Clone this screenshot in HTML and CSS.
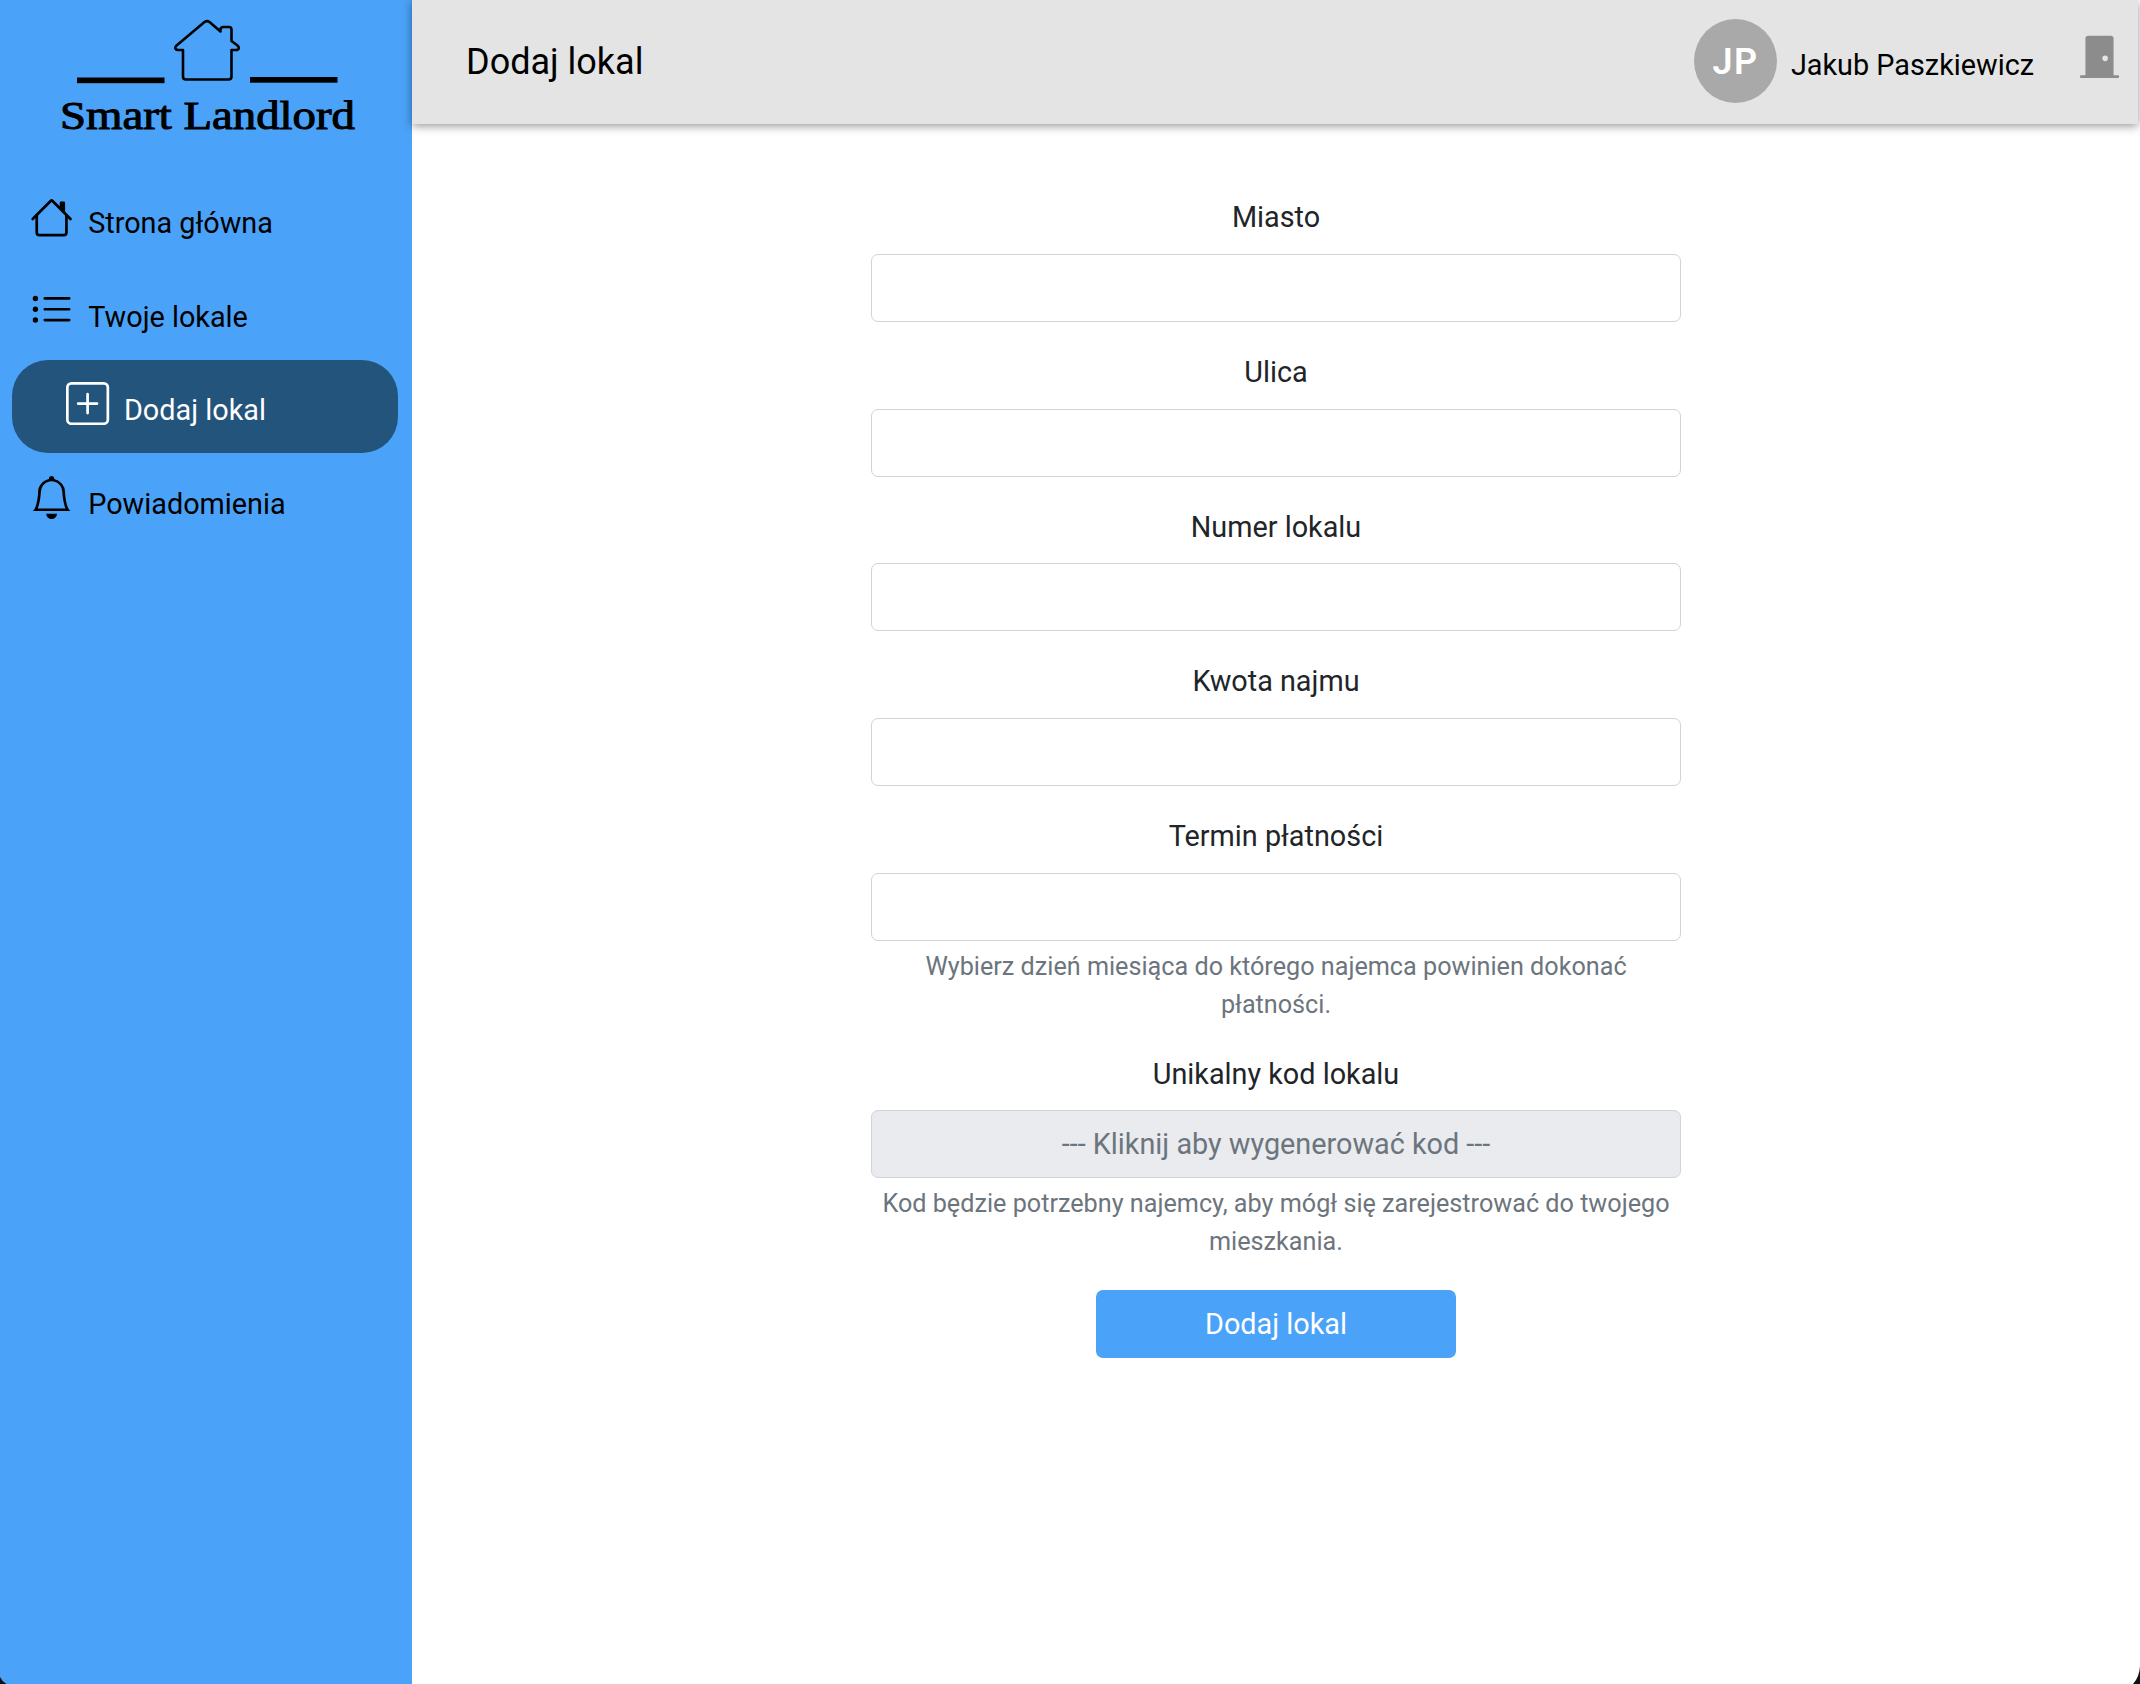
FILE: index.html
```html
<!DOCTYPE html>
<html lang="pl">
<head>
<meta charset="utf-8">
<title>Smart Landlord – Dodaj lokal</title>
<link rel="stylesheet" href="styles.css">
</head>
<body>
<div class="app">
  <aside class="sidebar">
    <svg class="logo" viewBox="0 0 412 150" role="img" aria-label="Smart Landlord">
      <path class="logo-house" d="M183 50v26.500q0 3 3 3h42.500q3 0 3-3V50h5.500q3.500-1.500.500-4.500L231.500 41V29.500q0-2.500-2.500-2.500h-5.500q-3 0-3 2.500V31.500L209.500 22q-2.500-1.800-5 0L176 46q-2 3 1.500 4z"/>
      <rect x="77" y="77.500" width="87.500" height="5.700"/>
      <rect x="250" y="77" width="87.500" height="5.700"/>
      <text class="logo-text" x="60" y="129" textLength="295" lengthAdjust="spacingAndGlyphs">Smart Landlord</text>
    </svg>
    <nav class="nav">
      <a class="nav-item">
        <svg class="icon" viewBox="0 0 16 16"><path d="M2 13.500V7h1v6.500a.5.5 0 0 0 .5.5h9a.5.5 0 0 0 .5-.5V7h1v6.500a1.500 1.500 0 0 1-1.500 1.500h-9A1.500 1.500 0 0 1 2 13.500zm11-11V6l-2-2V2.500a.5.5 0 0 1 .5-.5h1a.5.5 0 0 1 .5.5z"/><path d="M7.293 1.500a1 1 0 0 1 1.414 0l6.647 6.646a.5.5 0 0 1-.708.708L8 2.207 1.354 8.854a.5.5 0 1 1-.708-.708L7.293 1.500z"/></svg>
        <span>Strona główna</span>
      </a>
      <a class="nav-item">
        <svg class="icon" viewBox="0 0 16 16"><path d="M5 11.500a.5.5 0 0 1 .5-.5h9a.5.5 0 0 1 0 1h-9a.5.5 0 0 1-.5-.5zm0-4a.5.5 0 0 1 .5-.5h9a.5.5 0 0 1 0 1h-9a.5.5 0 0 1-.5-.5zm0-4a.5.5 0 0 1 .5-.5h9a.5.5 0 0 1 0 1h-9a.5.5 0 0 1-.5-.5zm-3 1a1 1 0 1 0 0-2 1 1 0 0 0 0 2zm0 4a1 1 0 1 0 0-2 1 1 0 0 0 0 2zm0 4a1 1 0 1 0 0-2 1 1 0 0 0 0 2z"/></svg>
        <span>Twoje lokale</span>
      </a>
      <a class="nav-item nav-item--sub nav-item--active">
        <svg class="icon" viewBox="0 0 16 16"><path d="M14 1a1 1 0 0 1 1 1v12a1 1 0 0 1-1 1H2a1 1 0 0 1-1-1V2a1 1 0 0 1 1-1h12zM2 0a2 2 0 0 0-2 2v12a2 2 0 0 0 2 2h12a2 2 0 0 0 2-2V2a2 2 0 0 0-2-2H2z"/><path d="M8 4a.5.5 0 0 1 .5.5v3h3a.5.5 0 0 1 0 1h-3v3a.5.5 0 0 1-1 0v-3h-3a.5.5 0 0 1 0-1h3v-3A.5.5 0 0 1 8 4z"/></svg>
        <span>Dodaj lokal</span>
      </a>
      <a class="nav-item">
        <svg class="icon" viewBox="0 0 16 16"><path d="M8 16a2 2 0 0 0 2-2H6a2 2 0 0 0 2 2zM8 1.918l-.797.161A4.002 4.002 0 0 0 4 6c0 .628-.134 2.197-.459 3.742-.16.767-.376 1.566-.663 2.258h10.244c-.287-.692-.502-1.490-.663-2.258C12.134 8.197 12 6.628 12 6a4.002 4.002 0 0 0-3.203-3.920L8 1.917zM14.220 12c.223.447.481.801.780 1H1c.299-.199.557-.553.780-1C2.680 10.200 3 6.880 3 6c0-2.420 1.720-4.440 4.005-4.901a1 1 0 1 1 1.990 0A5.002 5.002 0 0 1 13 6c0 .880.320 4.200 1.220 6z"/></svg>
        <span>Powiadomienia</span>
      </a>
    </nav>
  </aside>
  <div class="content">
    <header class="topbar">
      <h1 class="title">Dodaj lokal</h1>
      <div class="avatar">JP</div>
      <span class="user">Jakub Paszkiewicz</span>
      <svg class="door" viewBox="0 0 16 16"><path d="M12 1a1 1 0 0 1 1 1v13h1.500a.5.5 0 0 1 0 1h-13a.5.5 0 0 1 0-1H3V2a1 1 0 0 1 1-1h8zm-2 9a1 1 0 1 0 0-2 1 1 0 0 0 0 2z"/></svg>
    </header>
    <form class="form">
      <div class="field"><label for="city">Miasto</label><input id="city" type="text"></div>
      <div class="field"><label for="street">Ulica</label><input id="street" type="text"></div>
      <div class="field"><label for="number">Numer lokalu</label><input id="number" type="text"></div>
      <div class="field"><label for="rent">Kwota najmu</label><input id="rent" type="text"></div>
      <div class="field">
        <label for="due">Termin płatności</label><input id="due" type="text">
        <small>Wybierz dzień miesiąca do którego najemca powinien dokonać płatności.</small>
      </div>
      <div class="field">
        <label for="code">Unikalny kod lokalu</label><input id="code" type="text" readonly placeholder="--- Kliknij aby wygenerować kod ---">
        <small>Kod będzie potrzebny najemcy, aby mógł się zarejestrować do twojego mieszkania.</small>
      </div>
      <button class="submit" type="button">Dodaj lokal</button>
    </form>
  </div>
</div>
<svg class="corner corner--left" viewBox="0 0 8 20"><path d="M0 13Q2 17.500 6.500 20H0z"/></svg>
<svg class="corner corner--right" viewBox="0 0 8 20"><path d="M8 2Q7.500 13 1 20H8z"/></svg>
</body>
</html>
```
FILE: styles.css
```css
* {
  box-sizing: border-box;
}

body {
  margin: 0;
  font-family: Roboto, "Liberation Sans", sans-serif;
  font-size: 28.8px;
  line-height: 43.2px;
  color: #212529;
  background: #fff;
}

.app {
  display: flex;
  height: 1684px;
  overflow: hidden;
}

.sidebar {
  flex: none;
  width: 412px;
  background: #4aa3f8;
  color: #000;
}

.logo {
  display: block;
  width: 412px;
  height: 150px;
}

.logo-house {
  fill: none;
  stroke: #000;
  stroke-width: 2.6;
  stroke-linejoin: round;
}

.logo-text {
  font-family: "Liberation Serif", serif;
  font-size: 40px;
  stroke: #000;
  stroke-width: 1;
}

.nav {
  padding: 23px 14px 0 12px;
}

.nav-item {
  display: flex;
  gap: 15px;
  height: 93.5px;
  padding: 22.500px 18px 0;
}

.nav-item span {
  margin-top: 6.700px;
}

.nav-item--sub {
  padding-left: 54.400px;
  gap: 14.400px;
}

.nav-item--active {
  height: 93px;
  margin-bottom: 0.6px;
  padding-top: 22px;
  border-radius: 36px;
  background: #23547c;
  color: #fff;
}

.icon {
  width: 43.2px;
  height: 43.2px;
  fill: currentColor;
}

.content {
  flex: 1;
}

.topbar {
  display: flex;
  align-items: flex-start;
  height: 124px;
  margin-right: 2px;
  padding: 19px 16px 0 54px;
  background: #e4e4e4;
  box-shadow: 0 2px 9px rgba(0, 0, 0, 0.42);
  color: #000;
}

.title {
  flex: 1;
  margin: 22px 0 0;
  font-size: 36px;
  font-weight: 400;
}

.avatar {
  width: 83px;
  height: 84px;
  border-radius: 50%;
  background: #a9a9a9;
  color: #fff;
  font-size: 36px;
  font-weight: 600;
  line-height: 87px;
  letter-spacing: 1.5px;
  text-align: center;
}

.user {
  margin: 25px 43px 0 14px;
}

.door {
  width: 45px;
  height: 45px;
  margin-top: 14px;
  fill: #8c8c8c;
}

.form {
  display: flex;
  flex-direction: column;
  width: 810px;
  margin: 72.400px auto 0;
  text-align: center;
}

.field {
  display: flex;
  flex-direction: column;
  margin-bottom: 29.100px;
}

.field label {
  margin-bottom: 14.400px;
}

.field input {
  width: 100%;
  height: 68px;
  padding: 0 21.600px;
  border: 1px solid #ced4da;
  border-radius: 7px;
  font: inherit;
  text-align: center;
}

.field input[readonly] {
  background: #e9ebef;
}

.field input::placeholder {
  color: #6c757d;
  opacity: 1;
}

.field small {
  margin-top: 7.200px;
  font-size: 25.2px;
  line-height: 37.8px;
  color: #6c757d;
}

.submit {
  align-self: center;
  width: 360px;
  height: 68px;
  padding: 1.5px 0 0;
  border: 0;
  border-radius: 7px;
  background: #4aa3f8;
  color: #fff;
  font: inherit;
}

.corner {
  position: absolute;
  top: 1664px;
  width: 8px;
  height: 20px;
  fill: #111;
}

.corner--left {
  left: 0;
}

.corner--right {
  left: 2132px;
}
```
